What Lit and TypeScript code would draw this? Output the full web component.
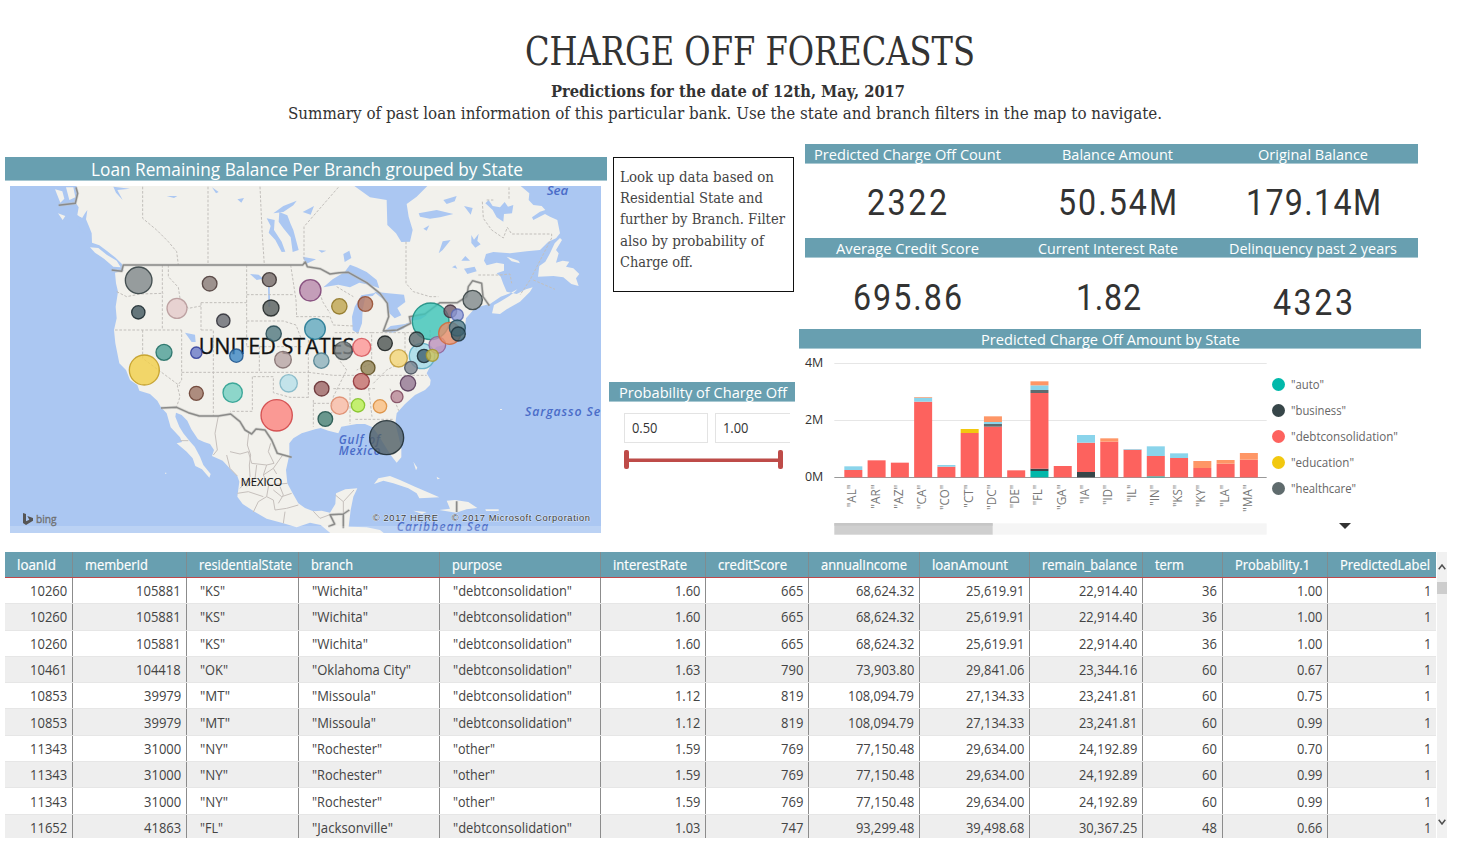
import { LitElement, html, svg, css } from "lit";
import { customElement } from "lit/decorators.js";

/* One line of text set to an exact advance width; the box is centred on the cap height. */
const fit = (text: string, width: number, size: number, cls = "ui") => html`
  <svg class="fit ${cls}" width=${width} height=${size} viewBox="0 0 ${width} ${size}">
    <text x="0" y=${size * 0.857} font-size=${size} textLength=${width} lengthAdjust="spacingAndGlyphs">${text}</text>
  </svg>`;

/* Narrow glyphs with open tracking, for the large figures. */
const figure = (text: string, width: number, size: number) => html`
  <svg class="fit din" width=${width} height=${size} viewBox="0 0 ${width} ${size}">
    <text transform="scale(0.87 1)" x="0" y=${size * 0.857} font-size=${size} textLength=${width / 0.87} lengthAdjust="spacing">${text}</text>
  </svg>`;

const fitStyles = css`
  .fit { display: block; overflow: visible; flex: none; fill: currentColor; }
  .ui { font-family: "Open Sans", "Noto Sans", sans-serif; }
  .din { font-family: Roboto, "Liberation Sans", sans-serif; }
  .serif { font-family: "DejaVu Serif", "Liberation Serif", serif; }
  .strong { font-family: "DejaVu Serif", "Liberation Serif", serif; font-weight: 700; }
  .bar { background: #689fb0; color: #fff; box-sizing: border-box; border-bottom: 1px solid #a8c8d2; display: flex; align-items: center; }
`;

/* Map drawing units are a third of a pixel. */
const LAND = [
  "M228,100 L234,130 228,160 236,172 232,195 246,205 255,190 262,180 258,208 268,232 275,250 276,278 298,286 322,304 345,322 366,342 370,362 345,368 348,400 354,425 347,470 350,505 342,540 346,580 352,610 358,640 378,660 390,690 412,705 418,722 450,732 472,752 483,772 500,790 512,832 540,862 546,876 530,880 560,905 578,925 586,948 606,958 628,983 632,972 610,945 600,920 584,890 568,872 550,850 538,830 526,800 528,788 545,795 562,812 574,838 594,868 612,876 630,882 642,900 636,918 668,932 692,958 712,978 718,995 712,1040 728,1062 765,1086 800,1106 850,1120 890,1132 930,1118 962,1125 990,1148 1000,1160 1165,1160 1140,1140 1100,1132 1046,1130 1052,1080 1060,1040 1072,1015 1036,1018 1008,1030 1006,1062 990,1088 965,1082 940,1084 915,1074 895,1060 878,1030 862,1000 858,960 868,915 868,880 880,865 905,850 945,838 962,834 985,842 1015,850 1024,830 1070,822 1095,822 1118,832 1135,855 1150,880 1172,915 1190,938 1204,922 1204,895 1196,860 1186,820 1190,790 1215,762 1245,735 1275,720 1290,705 1292,690 1280,670 1290,650 1300,620 1295,605 1310,590 1345,582 1400,558 1382,548 1395,530 1398,505 1420,480 1445,468 1470,462 1502,440 1530,430 1552,418 1545,425 1528,438 1500,455 1482,465 1476,490 1500,492 1520,478 1560,455 1590,425 1598,412 1578,418 1550,432 1520,425 1510,402 1502,380 1490,370 1512,362 1512,342 1490,338 1460,346 1452,332 1458,312 1480,306 1530,310 1580,304 1620,300 1645,275 1668,265 1680,250 1672,210 1650,200 1635,192 1600,210 1596,202 1620,185 1636,180 1625,168 1600,165 1586,150 1588,130 1562,108 1560,100 Z",
  "M1680,264 L1664,280 1650,310 1636,335 1618,348 1614,380 1660,378 1690,382 1714,402 1736,408 1728,385 1738,372 1720,355 1698,350 1708,335 1688,332 1668,338 1676,310 1668,300 1686,270 Z",
  "M270,292 L295,294 320,314 350,332 362,352 340,350 312,326 285,308 Z",
  "M1520,320 L1555,332 1560,340 1535,334 Z",
  "M1122,1002 L1135,985 1170,978 1200,990 1245,1010 1280,1025 1318,1042 1258,1045 1250,1030 1225,1015 1180,1000 1150,992 Z",
  "M1340,1052 L1365,1050 1405,1056 1432,1074 1400,1078 1368,1088 1318,1080 1350,1076 Z",
  "M1456,1078 h40 v5 h-38 Z M1240,1082 l40,4 -14,6 Z",
  "M165,118 l22,6 6,22 -12,12 Z M198,112 l22,0 6,30 -18,8 Z M174,190 l22,8 -8,12 Z",
  "M1240,935 l12,18 -4,8 Z M1310,980 l10,6 -8,2 Z M1500,777 h6 v3 h-6 Z M495,968 h4 v3 h-4 Z",
];
const WATER = [
  "M1052,100 L1110,142 1160,150 1162,225 1188,250 1204,276 1230,275 1238,240 1226,200 1220,162 1250,140 1290,100 Z",
  "M838,186 L862,196 872,222 880,240 896,300 878,306 872,262 850,235 836,215 Z",
  "M800,205 L824,210 822,240 845,275 856,305 845,306 826,270 806,248 812,228 Z",
  "M820,190 L850,168 890,152 880,166 850,186 Z",
  "M970,412 L998,388 1034,366 1050,344 1070,352 1100,366 1130,390 1138,415 1110,405 1078,398 1050,412 1015,404 Z",
  "M1058,540 L1056,500 1064,470 1084,436 1128,428 1118,438 1096,440 1088,480 1086,520 1074,552 Z",
  "M1122,425 L1165,430 1212,434 1216,456 1192,474 1204,496 1184,505 1168,490 1160,455 1140,440 Z",
  "M1150,545 L1172,528 1215,522 1230,516 1210,536 1178,548 Z",
  "M1228,500 L1262,490 1282,494 1262,508 1234,512 Z",
  "M1256,190 L1310,180 1360,192 1320,202 1290,206 1260,200 Z M1330,150 l40,-12 -6,16 -24,8 Z M1392,168 l26,6 -6,20 Z",
  "M1456,160 L1466,150 1478,168 1500,172 1514,156 1524,170 1540,165 1536,190 1512,192 1510,215 1490,202 1478,180 Z",
  "M1316,310 l12,-36 24,-4 -24,30 Z M1414,255 l8,14 14,-18 -4,22 10,10 -16,10 -12,-14 Z M1392,356 l32,-6 6,14 -28,8 Z M1384,332 l12,-14 14,14 Z M1270,236 l18,-10 -8,16 Z M1356,352 l10,-6 6,10 Z",
  "M1030,312 l18,-10 6,22 -20,12 Z M955,300 l24,2 -14,6 Z M908,186 l34,-18 -10,26 Z M908,320 l40,8 -30,14 Z",
  "M340,110 L390,116 352,120 368,150 348,128 Z M500,138 l32,0 -10,6 Z M712,148 l20,-4 -8,14 Z M636,112 l20,14 -8,4 Z",
  "M555,548 l30,6 2,22 -12,0 Z M750,372 l26,2 14,12 -20,4 Z M804,410 h5 l2,60 -6,0 Z",
  "M230,200 l14,2 4,18 -12,-6 Z M236,228 l24,24 -12,-4 Z",
];
const BORDERS = [
  "M335,360 L365,364 370,345 H908 L916,336 922,350 960,356 990,372 1018,368 1045,367 1100,398 1140,430 1162,460 1166,500 1150,543 1192,540 1232,520 1228,500 1275,492 1320,458 1372,458 1400,440 1405,410 1418,392 1445,400 1449,440 1468,467",
  "M176,166 L226,160 233,130 228,112",
  "M483,774 L530,772 565,788 598,798 655,798 692,792 720,815 735,840 755,852 768,837 795,840 815,870 832,910 875,922",
  "M1370,1054 V1086 M1048,1080 L1030,1092 990,1094 1004,1122 985,1130 M1030,1092 V1135",
];
const STATES = "M428,110 V205 L470,240 505,275 530,305 535,345 M624,110 V345 M780,110 L786,240 793,345 M1015,112 L912,230 V345 M1218,275 V400 L1240,425 1290,440 1315,440 M1527,112 V150 M1460,150 h20 M1447,155 L1450,205 1475,240 1510,264 1522,232 1535,252 H1655 V264 L1590,390 1560,435 M1600,390 L1665,418 M1435,375 H1500 L1530,372 1535,400 M350,425 L380,440 420,432 490,430 M487,345 V540 M505,345 V380 L535,412 540,445 565,475 603,468 M603,458 H740 M740,345 V590 M603,458 V540 M345,540 H545 M428,540 V625 L540,708 M545,540 V690 L532,708 540,740 530,770 M603,540 H640 V590 M640,560 V798 M545,667 H925 M740,434 H882 M872,345 L888,450 890,500 M740,513 H850 L888,525 905,570 M778,590 V667 M740,590 H905 M760,680 H820 V728 L870,742 930,742 M757,680 V784 H690 M888,500 H990 M925,570 V742 M990,500 L1000,525 1060,528 M960,430 L968,455 990,490 M1010,410 L1060,440 M1004,548 H1115 V640 L1070,660 M1115,548 H1240 M1290,540 V600 M1215,548 V610 M925,667 L1000,676 H1280 M1000,716 H1130 M1050,716 V822 M1106,716 L1116,800 M1170,716 L1196,782 M1066,808 H1180 M940,750 V830 M940,760 H1000 M1000,560 L1010,620 1040,660 1000,740 995,790 M1120,700 L1160,660 1200,640 M1240,570 L1260,640";
const MEXICO = "M655,798 L645,850 652,900 640,915 M746,850 L742,885 752,915 748,945 M680,915 L690,955 712,978 M690,905 L720,912 745,905 755,940 800,945 822,940 805,905 812,880 M748,945 L750,980 720,1015 M770,945 L765,985 740,1010 M800,945 L790,975 820,955 848,915 M820,955 L830,972 M790,975 L806,1005 800,1040 820,1050 M806,1005 L862,1000 M820,1020 L845,1040 875,1030 M840,1010 L850,1035 835,1060 M712,1030 L745,1025 790,1040 M760,1086 L775,1055 800,1040 M820,1050 L825,1080 860,1075 895,1065 M850,1120 L855,1085 M541,872 H565 M1006,1035 L1030,1055 1062,1020 M1030,1055 V1092 M940,1084 L960,1105 990,1094";

type Bubble = [number, number, number, string, string];
const BUBBLES: Bubble[] = [
  [416, 391, 40, "#81898b", "#2f3c3e"], [629, 401, 22, "#8a7c79", "#4a3836"], [808, 389, 21, "#776c6b", "#352b2b"],
  [415, 487, 20, "#465a61", "#18262c"], [531, 475, 30, "#e4cbcb", "#b59698"], [670, 512, 20, "#6a6c74", "#2b2c34"],
  [813, 474, 24, "#5a6160", "#1c2222"], [821, 551, 23, "#547a81", "#234650"], [931, 421, 32, "#b98bad", "#7b3f73"],
  [1018, 469, 23, "#c0a652", "#8c7220"], [1096, 462, 22, "#b57a66", "#944a2c"], [945, 537, 31, "#64aac0", "#1f7590"],
  [492, 607, 24, "#4fa097", "#1d6b62"], [589, 608, 17, "#6c7cc8", "#2b3a98"], [709, 617, 20, "#3f89c4", "#1b5088"],
  [849, 629, 25, "#b8a6a6", "#7d6869"], [433, 660, 45, "#f1d04c", "#c09a20"], [866, 700, 26, "#b8dfe9", "#7db4c4"],
  [589, 730, 21, "#9d7565", "#653a2c"], [698, 728, 29, "#76cfc2", "#269c8d"], [830, 796, 47, "#fb8580", "#cf3f42"],
  [964, 632, 23, "#8fb2bd", "#4b7c8c"], [1030, 602, 27, "#7c8486", "#4a5254"], [1085, 592, 27, "#fc9797", "#d35358"],
  [1155, 580, 22, "#505856", "#161c1c"], [1104, 653, 21, "#938455", "#5a4a1b"], [1196, 625, 26, "#f3d67a", "#bf9a35"],
  [1292, 514, 55, "#3fc6b9", "#16897e"], [1266, 618, 38, "#a4dbe9", "#5aaac2"], [1250, 568, 22, "#5d6d70", "#202c2e"],
  [1312, 585, 25, "#bd94bd", "#8b5e92"], [1349, 550, 33, "#e78f6b", "#d06a3c"], [1351, 484, 19, "#75606e", "#42303e"],
  [1372, 495, 18, "#8c9ad8", "#5a68b2"], [1372, 534, 24, "#57808f", "#24505f"], [1375, 552, 21, "#3d5f6b", "#1b333d"],
  [1418, 450, 29, "#838b8d", "#343e40"], [1272, 618, 20, "#416270", "#1a2d35"], [1297, 616, 18, "#cdc35c", "#a5962b"],
  [1233, 653, 19, "#7c8590", "#454e5a"], [1084, 694, 24, "#c5706e", "#8e2e32"], [965, 716, 22, "#9f6868", "#62292d"],
  [1019, 767, 26, "#f9bca7", "#dc8767"], [1074, 766, 20, "#b9ee55", "#7fc021"], [1140, 769, 20, "#fabf83", "#d98b3a"],
  [1191, 740, 18, "#b98a99", "#7e465c"], [1224, 700, 23, "#957994", "#523453"], [976, 807, 22, "#4a8278", "#1a4d46"],
  [1160, 863, 51, "#536168", "#1a282e"],
];

@customElement("branch-map")
class BranchMap extends LitElement {
  static styles = css`
    :host { display: block; width: 591px; height: 347px; }
    svg { display: block; }
    .halo { fill: none; stroke: #bfbfbb; stroke-width: 9; stroke-linejoin: round; opacity: .5; }
    .border { fill: none; stroke: #8b8b89; stroke-width: 4.5; stroke-linejoin: round; }
    .dash { fill: none; stroke: #c2bfbb; stroke-width: 3; stroke-dasharray: 8 5; }
    .mex { fill: none; stroke: #c6c0bc; stroke-width: 3; stroke-linejoin: round; }
    .label { font-family: "Open Sans", "Noto Sans", sans-serif; fill: #111; stroke: #111; stroke-width: 1; }
    .small { stroke-width: .3; }
    .sea { font-family: "Open Sans", "Noto Sans", sans-serif; font-style: italic; font-weight: 600; fill: #4a6cc8; }
    .copy { font-family: "Liberation Sans", sans-serif; fill: #3c3c3c; stroke: #dbe6f8; stroke-width: 3; paint-order: stroke; }
    .bing { font-family: "Open Sans", sans-serif; fill: #707070; stroke: #707070; }
  `;
  render() {
    return html`<svg width="591" height="347" viewBox="30 108 1773 1041">
      <rect x="30" y="108" width="1773" height="1041" fill="#abc7f2"></rect>
      ${LAND.map((d) => svg`<path d=${d} fill="#f2f1ec"></path>`)}
      ${WATER.map((d) => svg`<path d=${d} fill="#abc7f2"></path>`)}
      <path class="dash" d=${STATES}></path>
      <path class="mex" d=${MEXICO}></path>
      ${BORDERS.map((d) => svg`<path class="halo" d=${d}></path><path class="border" d=${d}></path>`)}
      <text class="label" x="596" y="612" font-size="66" textLength="467" lengthAdjust="spacingAndGlyphs">UNITED STATES</text>
      <text class="label small" x="722" y="1009" font-size="31" textLength="125" lengthAdjust="spacingAndGlyphs">MEXICO</text>
      <text class="sea" x="1640" y="136" font-size="36" textLength="65" lengthAdjust="spacingAndGlyphs">Sea</text>
      <text class="sea" x="1575" y="798" font-size="37" textLength="250">Sargasso Sea</text>
      <text class="sea" x="1016" y="882" font-size="35" textLength="124">Gulf of</text>
      <text class="sea" x="1016" y="916" font-size="35" textLength="125">Mexico</text>
      <text class="sea" x="1190" y="1142" font-size="36" textLength="275">Caribbean Sea</text>
      ${BUBBLES.map(([x, y, r, f, s]) => svg`<circle cx=${x} cy=${y} r=${r} fill=${f} fill-opacity="0.82" stroke=${s} stroke-opacity="0.85" stroke-width="4"></circle>`)}
      <rect x="30" y="1128" width="1773" height="21" fill="#fff" opacity="0.2"></rect>
      <path d="M69,1089 L78,1092 V1114 L88,1109 82,1098 99,1104 V1112 L78,1125 69,1119 Z" fill="#555"></path>
      <text class="bing" x="108" y="1118" font-size="34" textLength="62" lengthAdjust="spacingAndGlyphs">bing</text>
      <text class="copy" x="1118" y="1114" font-size="28" textLength="196">© 2017 HERE</text>
      <text class="copy" x="1355" y="1114" font-size="28" textLength="415">© 2017 Microsoft Corporation</text>
    </svg>`;
  }
}

const C = { t: "#01b8aa", k: "#374649", r: "#fd625e", y: "#f2c80f", g: "#5f6b6d", b: "#8ad4eb", o: "#fe9666" };
type Seg = [keyof typeof C, number];
const BARS: [string, Seg[], number][] = [
  ["AL", [["r", 22], ["b", 11]], 68], ["AR", [["r", 51]], 72], ["AZ", [["r", 44]], 72],
  ["CA", [["r", 227], ["b", 12], ["o", 2]], 74], ["CO", [["r", 32], ["b", 5]], 76],
  ["CT", [["r", 133], ["y", 12]], 69], ["DC", [["r", 152], ["g", 8], ["b", 6], ["o", 17]], 76],
  ["DE", [["r", 21]], 71], ["FL", [["t", 19], ["k", 7], ["r", 227], ["g", 9], ["b", 14], ["o", 12]], 62],
  ["GA", [["r", 34]], 76], ["IA", [["k", 16], ["r", 88], ["b", 23]], 58], ["ID", [["r", 107], ["o", 10]], 61],
  ["IL", [["r", 83], ["b", 2]], 52], ["IN", [["t", 3], ["r", 61], ["b", 29]], 63],
  ["KS", [["r", 58], ["b", 14]], 67], ["KY", [["r", 28], ["o", 21]], 67],
  ["LA", [["r", 41], ["o", 11]], 67], ["MA", [["r", 53], ["o", 20]], 82],
];
const LEGEND: [string, string, number][] = [
  ["auto", C.t, 33], ["business", C.k, 55], ["debtconsolidation", C.r, 107], ["education", C.y, 63], ["healthcare", C.g, 65],
];

@customElement("state-chart")
class StateChart extends LitElement {
  static styles = [fitStyles, css`
    :host { display: flex; width: 622px; height: 187px; }
    .plot { display: block; flex: none; }
    .axis { font-family: "Open Sans", sans-serif; font-size: 37px; fill: #333; }
    .cat { font-family: "Open Sans", sans-serif; font-size: 38px; fill: #777; }
    .legend { display: flex; flex-direction: column; padding: 22px 0 0 5px; }
    .item { display: flex; align-items: center; gap: 6px; height: 26px; color: #666; }
    .dot { width: 13px; height: 13px; border-radius: 50%; flex: none; }
    .more { display: block; margin: 22px 0 0 67px; }
  `];
  render() {
    return html`
      <svg class="plot" width="468" height="187" viewBox="12 -3 1404 561">
        ${[["4M", 40], ["2M", 211], ["0M", 382]].map(([l, y]) => svg`
          <text class="axis" x="30" y=${Number(y) + 12} textLength="55" lengthAdjust="spacingAndGlyphs">${l}</text>
          <rect x="118" y=${Number(y) - 1} width="1297" height="3" fill=${y === 382 ? "#999" : "#e6e6e6"}></rect>`)}
        ${BARS.map(([name, segs, w], i) => {
          const x = 148 + i * 69.8;
          let top = 382;
          return svg`
            ${segs.map(([c, h]) => { top -= h; return svg`<rect x=${x} y=${top} width="54" height=${h} fill=${C[c]}></rect>`; })}
            <text class="cat" transform="translate(${x + 36} ${404 + w}) rotate(-90)" textLength=${w} lengthAdjust="spacingAndGlyphs">"${name}"</text>`;
        })}
        <rect x="118" y="520" width="1297" height="34" fill="#f5f5f5"></rect>
        <rect x="118" y="520" width="475" height="34" fill="#cfcfcf"></rect>
        <rect x="118" y="519" width="475" height="8" fill="#c6c6c6"></rect>
      </svg>
      <div class="legend">
        ${LEGEND.map(([n, c, w]) => html`<div class="item"><span class="dot" style="background:${c}"></span>${fit(`"${n}"`, w, 13)}</div>`)}
        <svg class="more" width="12" height="6" viewBox="0 0 12 6"><path d="M0,0 H12 L6,6 Z" fill="#333"></path></svg>
      </div>`;
  }
}

const COLS: [string, number, number, boolean][] = [
  ["loanId", 68, 39, true], ["memberId", 114, 63, true], ["residentialState", 112, 93, false], ["branch", 141, 42, false],
  ["purpose", 161, 50, false], ["interestRate", 105, 74, true], ["creditScore", 103, 69, true], ["annualIncome", 111, 86, true],
  ["loanAmount", 110, 76, true], ["remain_balance", 113, 95, true], ["term", 80, 29, true], ["Probability.1", 105, 75, true],
  ["PredictedLabel", 108, 90, true],
];
const ROWS = [
  "10260|105881|KS|Wichita|debtconsolidation|1.60|665|68,624.32|25,619.91|22,914.40|36|1.00|1",
  "10260|105881|KS|Wichita|debtconsolidation|1.60|665|68,624.32|25,619.91|22,914.40|36|1.00|1",
  "10260|105881|KS|Wichita|debtconsolidation|1.60|665|68,624.32|25,619.91|22,914.40|36|1.00|1",
  "10461|104418|OK|Oklahoma City|debtconsolidation|1.63|790|73,903.80|29,841.06|23,344.16|60|0.67|1",
  "10853|39979|MT|Missoula|debtconsolidation|1.12|819|108,094.79|27,134.33|23,241.81|60|0.75|1",
  "10853|39979|MT|Missoula|debtconsolidation|1.12|819|108,094.79|27,134.33|23,241.81|60|0.99|1",
  "11343|31000|NY|Rochester|other|1.59|769|77,150.48|29,634.00|24,192.89|60|0.70|1",
  "11343|31000|NY|Rochester|other|1.59|769|77,150.48|29,634.00|24,192.89|60|0.99|1",
  "11343|31000|NY|Rochester|other|1.59|769|77,150.48|29,634.00|24,192.89|60|0.99|1",
  "11652|41863|FL|Jacksonville|debtconsolidation|1.03|747|93,299.48|39,498.68|30,367.25|48|0.66|1",
].map((r) => r.split("|"));
const WORDS: Record<string, number> = {
  KS: 25, OK: 28, MT: 30, NY: 28, FL: 23, Wichita: 56, "Oklahoma City": 99, Missoula: 64, Rochester: 70,
  Jacksonville: 81, debtconsolidation: 119, other: 42,
};
const numWidth = (s: string) => [...s].reduce((a, ch) => a + (/\d/.test(ch) ? 7.45 : 3.1), 0);

@customElement("loan-table")
class LoanTable extends LitElement {
  static styles = [fitStyles, css`
    :host { display: flex; gap: 1px; height: 286px; margin-left: 5px; width: 1442px; overflow: hidden; }
    .grid { width: 1431px; overflow: hidden; }
    .row { display: flex; height: 26.3px; box-sizing: border-box; border-bottom: 1px solid #e6e6e6; color: #444; }
    .row.alt { background: #eee; }
    .row.head { height: 26px; background: #689fb0; color: #fff; border-bottom: 1px solid #c0484a; }
    .cell { box-sizing: border-box; display: flex; align-items: center; flex: none; padding: 0 5px 0 13px; border-right: 1px solid #8c8c8c; }
    .cell:last-child { border-right: 0; }
    .num { justify-content: flex-end; }
    .head .cell { padding-left: 12px; padding-right: 0; padding-top: 1px; border-right-color: #7f8c90; }
    .head .fit { stroke: #fff; stroke-width: .2px; }
    .row:not(.head) .cell { padding-top: 1px; }
    .scroll { width: 10px; background: #f1f1f1; display: flex; flex-direction: column; align-items: center; }
    .up { margin-top: 12px; }
    .thumb { width: 10px; height: 12px; background: #cdcdcd; margin-top: 12px; }
    .down { margin-top: 225px; }
  `];
  render() {
    return html`
      <div class="grid">
        <div class="row head">${COLS.map(([n, w, tw]) => html`<div class="cell" style="width:${w}px">${fit(n, tw, 14, "ui")}</div>`)}</div>
        ${ROWS.map((r, i) => html`<div class="row ${i % 2 ? "alt" : ""}">${r.map((v, j) => {
          const num = COLS[j][3];
          return html`<div class="cell ${num ? "num" : ""}" style="width:${COLS[j][1]}px">${num ? fit(v, numWidth(v), 14) : fit(`"${v}"`, WORDS[v], 14)}</div>`;
        })}</div>`)}
      </div>
      <div class="scroll">
        <svg class="up" width="8" height="6" viewBox="0 0 8 6"><path d="M.7,5.3 L4,1 7.3,5.3" fill="none" stroke="#505050" stroke-width="1.5"></path></svg>
        <div class="thumb"></div>
        <svg class="down" width="8" height="6" viewBox="0 0 8 6"><path d="M.7,.7 L4,5 7.3,.7" fill="none" stroke="#505050" stroke-width="1.5"></path></svg>
      </div>`;
  }
}

@customElement("app-root")
class AppRoot extends LitElement {
  static styles = [fitStyles, css`
    :host { display: block; width: 1461px; height: 843px; background: #fff; overflow: hidden; }
    header { height: 144px; box-sizing: border-box; padding-top: 31px; color: #333; }
    .title { padding-left: 525px; height: 39px; }
    .sub { padding: 13px 0 0 551px; height: 16px; }
    .desc { padding: 6px 0 0 288px; }
    main { display: grid; grid-template-columns: 602px 184px 622px; column-gap: 4px; height: 408px; padding-left: 5px; }
    .left, .mid { padding-top: 13px; }
    .maptitle { height: 24px; padding: 2px 0 0 86px; margin-bottom: 5px; }
    branch-map { margin-left: 5px; }
    .note { box-sizing: border-box; width: 181px; height: 135px; border: 1.5px solid #111; margin-left: 2px; padding: 10.5px 0 0 6px; display: flex; flex-direction: column; gap: 6.7px; color: #444; }
    .ptitle { width: 186px; height: 20px; margin: 90px 0 0 -2px; padding: 1px 0 0 10px; }
    .inputs { display: flex; gap: 7px; margin: 11px 0 0 13px; }
    .input { box-sizing: border-box; width: 84px; height: 30px; border: 1px solid #e3e3e3; display: flex; align-items: center; padding-left: 7px; color: #333; }
    .input.cut { width: 75px; border-right: 0; }
    .slider { display: flex; align-items: center; margin: 7px 0 0 13px; width: 159px; }
    .handle { width: 5px; height: 19px; border-radius: 2px; background: #be4b48; }
    .track { flex: 1; height: 4px; background: #be4b48; border-top: 1px solid #dba5a3; box-sizing: border-box; }
    .right { display: flex; flex-direction: column; }
    .kpis { display: grid; margin-left: 6px; width: 613px; }
    .k1 { grid-template-columns: 204px 216px 193px; height: 94px; }
    .k2 { grid-template-columns: 204px 198px 211px; height: 91px; }
    .kpi { display: flex; flex-direction: column; align-items: center; }
    .kpi .bar { width: 100%; height: 20px; justify-content: center; padding-top: 1px; }
    .kpi.inset .bar { padding-right: 17px; }
    .value { display: flex; height: 75px; align-items: center; color: #333; }
    .inset .value { padding-right: 17px; }
    .k2 .value { height: 77px; }
    .k2 .low .value { height: 86px; }
    .ctitle { height: 20px; padding: 1px 0 0 182px; }
  `];
  kpi(label: string, lw: number, value: string, vw: number, cls = "") {
    return html`<div class="kpi ${cls}"><div class="bar">${fit(label, lw, 15)}</div><div class="value">${figure(value, vw, 37)}</div></div>`;
  }
  render() {
    return html`
      <header>
        <div class="title">${fit("CHARGE OFF FORECASTS", 450, 39.5, "serif")}</div>
        <div class="sub">${fit("Predictions for the date of 12th, May, 2017", 354, 16, "strong")}</div>
        <div class="desc">${fit("Summary of past loan information of this particular bank. Use the state and branch filters in the map to navigate.", 874, 16.5, "serif")}</div>
      </header>
      <main>
        <section class="left">
          <div class="bar maptitle">${fit("Loan Remaining Balance Per Branch grouped by State", 432, 18)}</div>
          <branch-map></branch-map>
        </section>
        <section class="mid">
          <div class="note">
            ${[["Look up data based on", 154], ["Residential State and", 143], ["further by Branch. Filter", 165], ["also by probability of", 144], ["Charge off.", 73]].map(([t, w]) => fit(String(t), Number(w), 14.8, "serif"))}
          </div>
          <div class="bar ptitle">${fit("Probability of Charge Off", 168, 15)}</div>
          <div class="inputs">
            <div class="input">${fit("0.50", 25.5, 14)}</div>
            <div class="input cut">${fit("1.00", 25.5, 14)}</div>
          </div>
          <div class="slider"><span class="handle"></span><span class="track"></span><span class="handle"></span></div>
        </section>
        <section class="right">
          <div class="kpis k1">
            ${this.kpi("Predicted Charge Off Count", 187, "2322", 80)}
            ${this.kpi("Balance Amount", 111, "50.54M", 119)}
            ${this.kpi("Original Balance", 110, "179.14M", 135, "inset")}
          </div>
          <div class="kpis k2">
            ${this.kpi("Average Credit Score", 143, "695.86", 109)}
            ${this.kpi("Current Interest Rate", 140, "1.82", 65)}
            ${this.kpi("Delinquency past 2 years", 168, "4323", 80, "low")}
          </div>
          <div class="bar ctitle">${fit("Predicted Charge Off Amount by State", 259, 15)}</div>
          <state-chart></state-chart>
        </section>
      </main>
      <loan-table></loan-table>`;
  }
}
